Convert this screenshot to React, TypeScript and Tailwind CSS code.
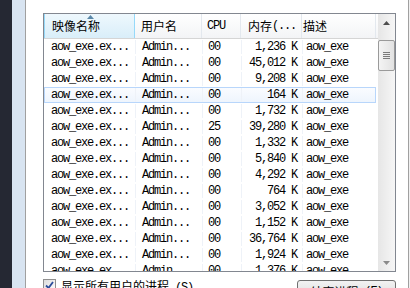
import React from "react";

const mems = ["1,236", "45,012", "9,208", "164", "1,732", "39,280", "1,332", "5,840", "4,292", "764", "3,052", "1,152", "36,764", "1,924", "1,376"];
const cpus = mems.map((_, i) => (i === 5 ? "25" : "00"));

const mono = "font-['Liberation_Mono',monospace] text-[12px] tracking-[-1.2px]";
const cjk = "font-['Noto_Sans_CJK_SC','Noto_Sans',sans-serif]";

export default function App() {
  return (
    <div className="w-[410px] h-[288px] flex overflow-hidden bg-white">
      <div className="w-[12px] shrink-0 bg-[#252833]" />
      <div className="w-[13px] shrink-0 bg-[#d8e4f1]" />
      <div className="w-px shrink-0 bg-[#a0a0a0]" />
      <div className="flex-1 flex flex-col pl-[17px] pt-[13px] pr-[12px] bg-white">
        <div className="h-[259px] shrink-0 border border-[#828790] flex overflow-hidden">
          <div className="flex-1 flex flex-col overflow-hidden">
            {/* header */}
            <div className="h-[25px] shrink-0 flex border-b border-[#d5d5d5] bg-gradient-to-b from-white to-[#f3f4f6]">
              <div className={`w-[91px] shrink-0 relative flex items-center pl-[7px] border-r border-l border-[#96d9f9] bg-gradient-to-b from-[#eef8fd] to-[#d9eef9] text-[12px] text-black ${cjk}`}>
                <svg className="absolute left-[42px] top-[1px]" width="7" height="4" viewBox="0 0 7 4">
                  <path d="M3.5 0 L7 4 L0 4 Z" fill="#5a87a8" />
                </svg>
                映像名称
              </div>
              <div className={`w-[67px] shrink-0 flex items-center pl-[6px] border-r border-[#e3e8ee] text-[12px] text-black ${cjk}`}>用户名</div>
              <div className={`w-[39px] shrink-0 flex items-center pl-[5px] border-r border-[#e3e8ee] text-black ${mono}`}>CPU</div>
              <div className={`w-[61px] shrink-0 flex items-center justify-end pr-[5px] border-r border-[#e3e8ee] text-[12px] text-black ${cjk}`}>
                内存<span className={mono}>(...</span>
              </div>
              <div className={`w-[74px] shrink-0 flex items-center pl-[1px] border-r border-[#e3e8ee] text-[12px] text-black ${cjk}`}>描述</div>
              <div className="flex-1" />
            </div>
            {/* rows */}
            <div className="flex-1 flex flex-col relative">
              {mems.map((m, i) => (
                <div
                  key={i}
                  className={`h-[16px] shrink-0 flex items-center w-[332px] ${mono} text-black ${i === 3 ? "border border-[#b8d6fb] bg-gradient-to-b from-[#fafcff] to-[#eef5fd]" : "border border-transparent"}`}
                >
                  <div className="w-[91px] shrink-0 pl-[6px] border-r border-[#eef2f8] h-full flex items-center">aow_exe.ex...</div>
                  <div className="w-[67px] shrink-0 pl-[6px] border-r border-[#eef2f8] h-full flex items-center">Admin...</div>
                  <div className="w-[39px] shrink-0 pl-[5px] border-r border-[#eef2f8] h-full flex items-center">{cpus[i]}</div>
                  <div className="w-[61px] shrink-0 pr-[5px] border-r border-[#eef2f8] h-full flex items-center justify-end">{m}&nbsp;K</div>
                  <div className="w-[72px] shrink-0 pl-[3px] h-full flex items-center">aow_exe</div>
                </div>
              ))}
            </div>
          </div>
          {/* scrollbar */}
          <div className="w-[17px] shrink-0 flex flex-col bg-gradient-to-r from-[#e6e6e6] to-[#f6f6f6]">
            <div className="h-[17px] shrink-0 flex items-center justify-center">
              <svg width="7" height="4" viewBox="0 0 7 4"><path d="M3.5 0 L7 4 L0 4 Z" fill="#4d4d4d" /></svg>
            </div>
            <div className="h-[9px] shrink-0" />
            <div className="h-[31px] shrink-0 rounded-[2px] border border-[#9a9a9a] bg-gradient-to-r from-[#f4f4f4] to-[#e2e2e2] flex flex-col items-center justify-center gap-[1px]">
              <div className="w-[7px] h-px bg-[#7b7b7b]" />
              <div className="w-[7px] h-px bg-[#7b7b7b]" />
              <div className="w-[7px] h-px bg-[#7b7b7b]" />
              <div className="w-[7px] h-px bg-[#7b7b7b]" />
            </div>
            <div className="flex-1" />
            <div className="h-[17px] shrink-0 flex items-center justify-center">
              <svg width="7" height="4" viewBox="0 0 7 4"><path d="M0 0 L7 0 L3.5 4 Z" fill="#8a8a8a" /></svg>
            </div>
          </div>
        </div>
        {/* bottom */}
        <div className="flex items-start mt-[7px]">
          <div className="w-[13px] h-[13px] shrink-0 border border-[#8f8f8f] bg-gradient-to-br from-[#dcdcdc] to-white flex items-center justify-center">
            <svg width="9" height="9" viewBox="0 0 9 9"><path d="M1 4.5 L3.5 7 L8 1" fill="none" stroke="#2a4c9a" strokeWidth="1.8" /></svg>
          </div>
          <div className={`ml-[5px] text-[12px] leading-[13px] text-black whitespace-pre ${cjk}`}>
            显示所有用户的进程<span className={mono}> (S)</span>
          </div>
          <div className="flex-1" />
          <div className={`w-[99px] h-[23px] mt-[1px] rounded-[3px] border border-[#707070] bg-gradient-to-b from-[#f2f2f2] to-[#d9d9d9] flex items-center justify-center text-[12px] text-black whitespace-pre ${cjk}`}>
            结束进程<span className={mono}> (E)</span>
          </div>
        </div>
      </div>
      <div className="w-px shrink-0 bg-[#a0a0a0]" />
      <div className="w-px shrink-0 bg-[#f0f0f0]" />
    </div>
  );
}
